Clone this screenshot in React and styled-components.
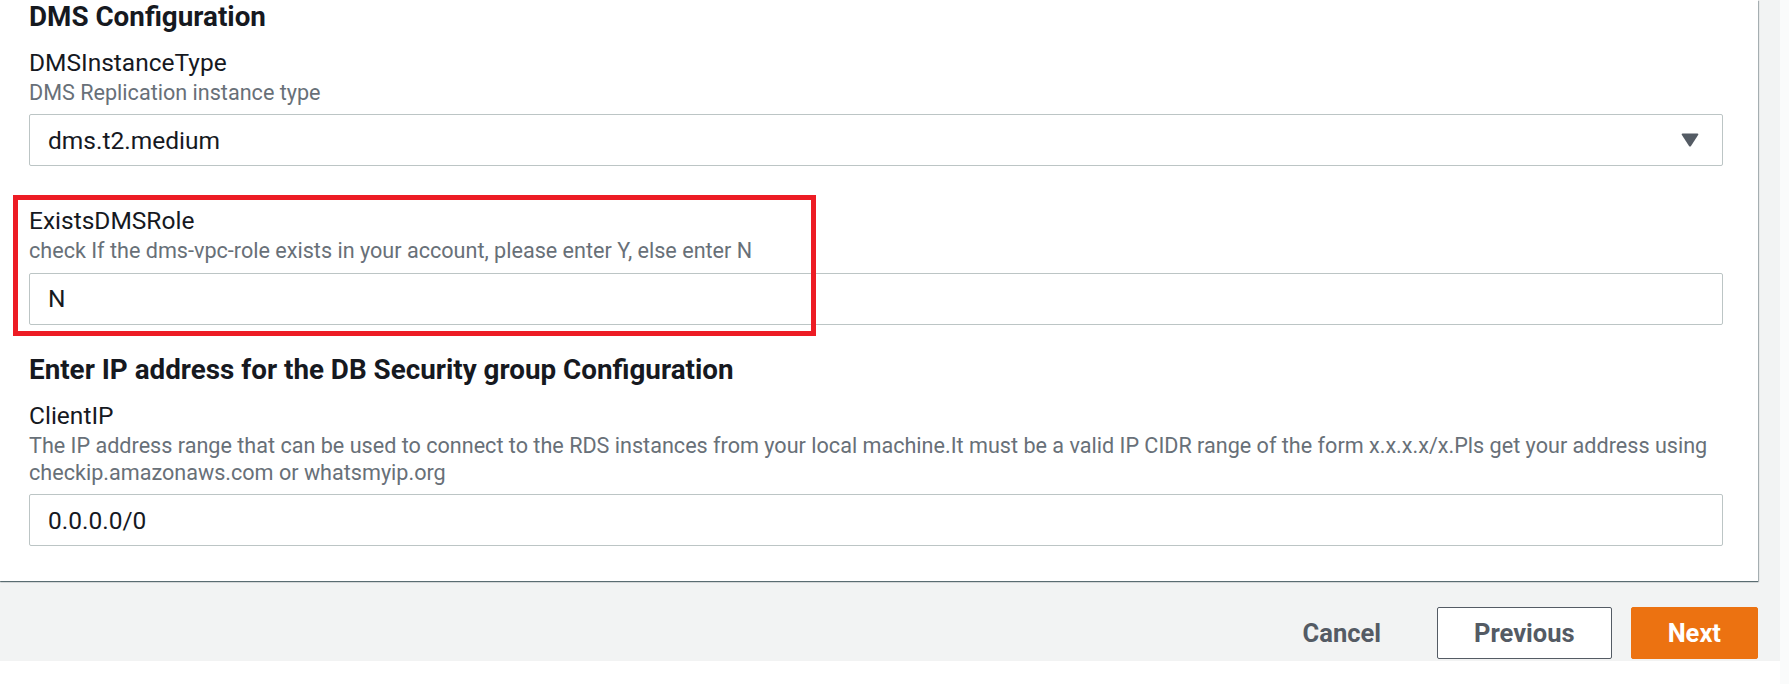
import React from 'react'
import styled, { createGlobalStyle } from 'styled-components'

const GlobalStyle = createGlobalStyle`
  body {
    margin: 0;
    background: #ffffff;
    font-family: Roboto, "Liberation Sans", Arial, sans-serif;
    color: #16191f;
  }
`;

const Page = styled.div`
  display: flex;
  width: 1789px;
  height: 684px;
  overflow: hidden;
`;

const Main = styled.div`
  flex: 1;
  display: flex;
  flex-direction: column;
`;

const Strip = styled.div`
  width: 9px;
  background: #fafbfb;
`;

const Workspace = styled.div`
  background: #f2f3f3;
  padding-right: 22px;
`;

const Panel = styled.div`
  background: #ffffff;
  padding: 0 35px 35px 29px;
  box-shadow: 0 1px 1px 0 rgba(0, 28, 36, 0.5), 1px 1px 1px 0 rgba(0, 28, 36, 0.25);
  display: flex;
  flex-direction: column;
  gap: 28.5px;
`;

const Section = styled.section`
  display: flex;
  flex-direction: column;
`;

const Heading = styled.h2`
  margin: 0 0 12.6px;
  font-size: 27.8px;
  line-height: 34px;
  font-weight: 700;
  color: #16191f;
`;

const Fields = styled.div`
  display: flex;
  flex-direction: column;
  gap: 38.4px;
`;

const Field = styled.div`
  position: relative;
  display: flex;
  flex-direction: column;
`;

const Label = styled.div`
  font-size: 24.5px;
  line-height: 32px;
  color: #16191f;
`;

const Description = styled.div`
  margin-top: 1.2px;
  font-size: 21.6px;
  line-height: 26.7px;
  color: #687078;
`;

const Control = styled.div`
  box-sizing: border-box;
  margin-top: 8px;
  height: 52px;
  display: flex;
  align-items: center;
  justify-content: space-between;
  padding: 0 23px 0 18px;
  border: 1px solid #bcc5c5;
  border-radius: 2px;
  background: #ffffff;
  font-size: 24.5px;
  color: #16191f;
`;

const TextInput = styled.input`
  box-sizing: border-box;
  margin-top: 8px;
  height: 52px;
  width: 100%;
  padding: 0 18px;
  border: 1px solid #bcc5c5;
  border-radius: 2px;
  background: #ffffff;
  font-family: inherit;
  font-size: 24.5px;
  color: #16191f;
  outline: none;
`;

const Highlight = styled.div`
  position: absolute;
  left: -16px;
  top: -10.3px;
  width: 803px;
  height: 141px;
  box-sizing: border-box;
  border: 5px solid #ed1c24;
  pointer-events: none;
`;

const Footer = styled.div`
  height: 80px;
  box-sizing: border-box;
  padding-top: 26px;
  display: flex;
  justify-content: flex-end;
  align-items: flex-start;
  gap: 19px;
`;

const Button = styled.button`
  box-sizing: border-box;
  height: 52px;
  padding: 0 36px;
  border-radius: 2px;
  font-family: inherit;
  font-size: 25.5px;
  font-weight: 700;
  cursor: pointer;
  border: 1px solid ${p => p.variant === 'primary' ? '#ec7211' : p.variant === 'normal' ? '#545b64' : 'transparent'};
  background: ${p => p.variant === 'primary' ? '#ec7211' : p.variant === 'normal' ? '#ffffff' : 'transparent'};
  color: ${p => p.variant === 'primary' ? '#ffffff' : '#545b64'};
`;

const Below = styled.div`
  flex: 1;
  background: #ffffff;
`;

const CaretDown = () => (
  <svg width="18" height="14" viewBox="0 0 18 14">
    <path d="M1.6 0.6 H16.4 Q17.9 0.6 17.1 1.9 L10 12.9 Q9 14.2 8 12.9 L0.9 1.9 Q0.1 0.6 1.6 0.6 Z" fill="#545b64" />
  </svg>
);

export default function App() {
  return (
    <Page>
      <GlobalStyle />
      <Main>
        <Workspace>
          <Panel>
            <Section>
              <Heading>DMS Configuration</Heading>
              <Fields>
                <Field>
                  <Label>DMSInstanceType</Label>
                  <Description>DMS Replication instance type</Description>
                  <Control>
                    <span>dms.t2.medium</span>
                    <CaretDown />
                  </Control>
                </Field>
                <Field>
                  <Highlight />
                  <Label>ExistsDMSRole</Label>
                  <Description>check If the dms-vpc-role exists in your account, please enter Y, else enter N</Description>
                  <TextInput readOnly value="N" />
                </Field>
              </Fields>
            </Section>
            <Section>
              <Heading>Enter IP address for the DB Security group Configuration</Heading>
              <Fields>
                <Field>
                  <Label>ClientIP</Label>
                  <Description>
                    The IP address range that can be used to connect to the RDS instances from your local machine.It must be a valid IP CIDR range of the form x.x.x.x/x.Pls get your address using checkip.amazonaws.com or whatsmyip.org
                  </Description>
                  <TextInput readOnly value="0.0.0.0/0" />
                </Field>
              </Fields>
            </Section>
          </Panel>
          <Footer>
            <Button>Cancel</Button>
            <Button variant="normal">Previous</Button>
            <Button variant="primary">Next</Button>
          </Footer>
        </Workspace>
        <Below />
      </Main>
      <Strip />
    </Page>
  );
}
